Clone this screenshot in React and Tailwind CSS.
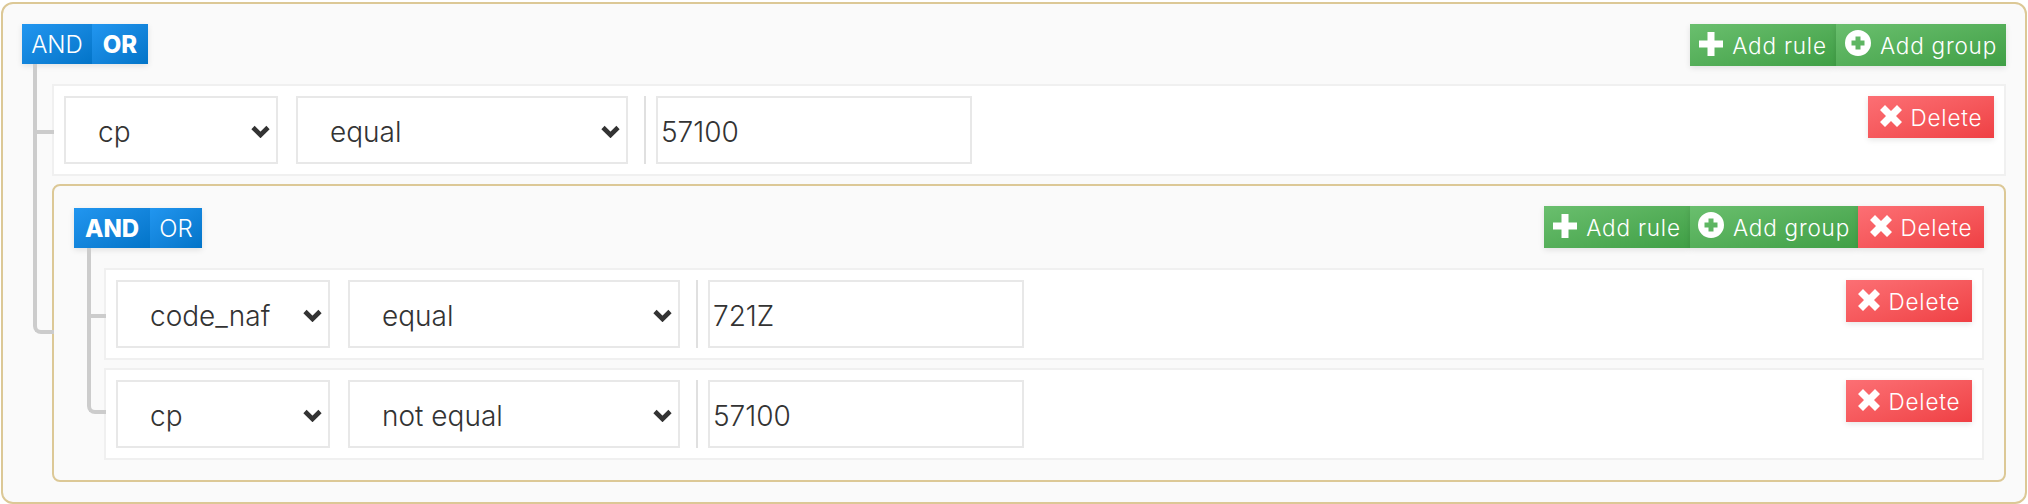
import { useState } from 'react';

const font = { fontFamily: 'Inter, sans-serif' };

function PlusIcon() {
  return (
    <svg width="24" height="24" viewBox="0 0 24 24" className="shrink-0 -mt-[2px]">
      <path d="M8.5 0h7v8.5H24v7h-8.5V24h-7v-8.5H0v-7h8.5z" fill="#fff" />
    </svg>
  );
}

function PlusCircleIcon() {
  return (
    <svg width="26" height="26" viewBox="0 0 26 26" className="shrink-0 -mt-[4px]">
      <path
        fillRule="evenodd"
        d="M13 0a13 13 0 1 1 0 26a13 13 0 0 1 0-26zM10.5 6.5v4h-4v5h4v4h5v-4h4v-5h-4v-4z"
        fill="#fff"
      />
    </svg>
  );
}

function CloseIcon() {
  return (
    <svg width="22" height="22" viewBox="0 0 22 22" className="shrink-0 -mt-[3px]">
      <path d="M5 0l6 6 6-6 5 5-6 6 6 6-5 5-6-6-6 6-5-5 6-6-6-6z" fill="#fff" />
    </svg>
  );
}

function Chevron() {
  return (
    <svg width="19" height="13" viewBox="0 0 19 13" className="absolute right-[8px] top-[29px] pointer-events-none">
      <path d="M2 2.5l7.5 7.5 7.5-7.5" fill="none" stroke="#333" strokeWidth="4.6" />
    </svg>
  );
}

function Btn({ color, icon, label, w }) {
  const colors = {
    green: 'from-[#6abf6e] to-[#3f9f45]',
    red: 'from-[#fc6f74] to-[#ef3f44]',
  };
  return (
    <button className={`flex items-center justify-center gap-[9px] ${w} h-[42px] bg-linear-to-br ${colors[color]} text-white text-[22.5px] font-light tracking-[0.8px] shadow-[0_2px_6px_rgba(0,0,0,0.1)]`}>
      {icon}
      <span className="mt-[2px]">{label}</span>
    </button>
  );
}

function Condition({ active }) {
  const on = 'font-extrabold';
  const off = 'font-light';
  return (
    <div className="flex h-[40px] text-white text-[24px] shadow-[0_2px_6px_rgba(0,0,0,0.1)]">
      <div className={`flex items-center justify-center pt-[2px] bg-linear-to-br from-[#2196f0] to-[#0274c8] ${active === 'AND' ? 'w-[76px] ' + on : 'w-[70px] ' + off}`}>AND</div>
      <div className={`flex items-center justify-center pt-[2px] bg-linear-to-br from-[#2196f0] to-[#0274c8] ${active === 'OR' ? 'w-[56px] ' + on : 'w-[52px] ' + off}`}>OR</div>
    </div>
  );
}

function Field({ width, value, options }) {
  const [val, setVal] = useState(value);
  return (
    <div className={`relative ${width} h-[68px]`}>
      <select
        value={val}
        onChange={e => setVal(e.target.value)}
        className="appearance-none w-full h-full bg-white border-2 border-[#e8e8e8] pl-[32px] pt-[3px] text-[28px] font-[350] text-[#333] outline-none"
      >
        {options.map(o => <option key={o}>{o}</option>)}
      </select>
      <Chevron />
    </div>
  );
}

function Rule({ field, op, value, connector }) {
  return (
    <div className="relative bg-white border-2 border-[#f0f0f0] h-[92px] pl-[10px] pt-[10px] pr-[10px] flex items-start justify-between">
      {connector}
      <div className="flex">
        <Field width="w-[214px]" value={field} options={['cp', 'code_naf']} />
        <Field width="w-[332px] ml-[18px]" value={op} options={['equal', 'not equal']} />
        <div className="w-[2px] h-[68px] bg-[#e0e0e0] ml-[16px]" />
        <input
          defaultValue={value}
          className="w-[316px] h-[68px] ml-[10px] bg-white border-2 border-[#e8e8e8] pl-[3px] pt-[3px] text-[28px] font-[350] text-[#333] outline-none"
        />
      </div>
      <Btn color="red" icon={<CloseIcon />} label="Delete" w="w-[126px]" />
    </div>
  );
}

export default function App() {
  return (
    <div style={font} className="pt-[2px] px-px">
      <div className="h-[502px] bg-[#fafafa] border-2 border-[#dcc896] rounded-[12px] pt-[20px] pl-[19px] pr-[19px]">
        <div className="flex items-start justify-between">
          <Condition active="OR" />
          <div className="flex">
            <Btn color="green" icon={<PlusIcon />} label="Add rule" w="w-[146px]" />
            <Btn color="green" icon={<PlusCircleIcon />} label="Add group" w="w-[170px]" />
          </div>
        </div>

        <div className="ml-[30px] mt-[18px]">
          <Rule
            field="cp"
            op="equal"
            value="57100"
            connector={<div className="absolute left-[-21px] top-[-22px] w-[21px] h-[70px] border-l-4 border-b-4 border-[#ccc]" />}
          />

          <div className="relative mt-[8px] h-[298px] bg-[#fafafa] border-2 border-[#dcc896] rounded-[8px] pt-[20px] pl-[20px] pr-[20px]">
            <div className="absolute left-[-21px] top-[-52px] w-[21px] h-[200px] border-l-4 border-b-4 border-[#ccc] rounded-bl-[8px]" />
            <div className="flex items-start justify-between">
              <div className="mt-[2px]"><Condition active="AND" /></div>
              <div className="flex">
                <Btn color="green" icon={<PlusIcon />} label="Add rule" w="w-[146px]" />
                <Btn color="green" icon={<PlusCircleIcon />} label="Add group" w="w-[168px]" />
                <Btn color="red" icon={<CloseIcon />} label="Delete" w="w-[126px]" />
              </div>
            </div>

            <div className="ml-[30px] mt-[20px] flex flex-col gap-[8px]">
              <Rule
                field="code_naf"
                op="equal"
                value="721Z"
                connector={<div className="absolute left-[-19px] top-[-22px] w-[19px] h-[70px] border-l-4 border-b-4 border-[#ccc]" />}
              />
              <Rule
                field="cp"
                op="not equal"
                value="57100"
                connector={<div className="absolute left-[-19px] top-[-52px] w-[19px] h-[96px] border-l-4 border-b-4 border-[#ccc] rounded-bl-[8px]" />}
              />
            </div>
          </div>
        </div>
      </div>
    </div>
  );
}
